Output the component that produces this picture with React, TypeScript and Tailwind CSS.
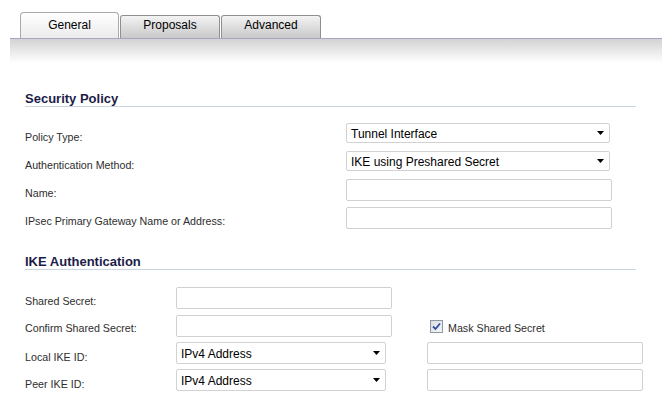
import React from "react";

const font = { fontFamily: '"Liberation Sans", Arial, sans-serif' };

function Arrow() {
  return (
    <svg width="7" height="4" viewBox="0 0 7 4" className="shrink-0">
      <path d="M0 0h7L3.5 4z" fill="#000" />
    </svg>
  );
}

function Select({ value, w, h }: { value: string; w: string; h: string }) {
  return (
    <div
      className={`${w} ${h} flex items-center justify-between border border-[#d2d2d2] rounded-[2px] bg-white pl-[4px] pr-[5px] text-[12px] leading-[14px] text-black`}
    >
      <span className="pt-px">{value}</span>
      <Arrow />
    </div>
  );
}

function Input({ w }: { w: string }) {
  return <div className={`${w} h-[22px] border border-[#d0d0d0] rounded-[2px] bg-white`} />;
}

function Label({ text, pt }: { text: string; pt: string }) {
  return <div className={`${pt} text-[10.7px] leading-[14px] text-[#2e2e2e]`}>{text}</div>;
}

function Heading({ text }: { text: string }) {
  return (
    <div className="h-[16px] border-b border-[#c9d6df] flex items-center">
      <span className="text-[13px] leading-[15px] font-bold text-[#1c1c48]">{text}</span>
    </div>
  );
}

function Tab({ label, active }: { label: string; active?: boolean }) {
  return (
    <div
      className={
        active
          ? "w-[99px] h-[26px] flex items-end justify-center pb-[6px] rounded-t-[4px] border border-b-0 border-[#a9a9a9] bg-gradient-to-b from-white to-[#ebebeb]"
          : "w-[100px] h-[23px] flex items-end justify-center pb-[6px] rounded-t-[3px] border border-b-0 border-[#8f8f8f] bg-gradient-to-b from-[#f3f3f3] to-[#c9c9c9]"
      }
    >
      <span className="text-[12px] leading-[14px] text-black">{label}</span>
    </div>
  );
}

export default function App() {
  return (
    <div className="w-[662px] h-[402px] bg-white overflow-hidden pt-[12px]" style={font}>
      <div className="flex items-end gap-px pl-[20px] h-[26px]">
        <Tab label="General" active />
        <Tab label="Proposals" />
        <Tab label="Advanced" />
      </div>
      <div className="ml-[10px] h-px bg-[#aaa6c0]" />
      <div className="ml-[10px] h-[24px] bg-gradient-to-b from-[#d3d3d3] to-white" />

      <div className="pl-[25px] pr-[26px] pt-[28px]">
        <Heading text="Security Policy" />
        <div className="mt-[16px] grid grid-cols-[321px_1fr]">
          <div className="h-[28px]"><Label text="Policy Type:" pt="pt-[7px]" /></div>
          <div className="h-[28px]"><Select value="Tunnel Interface" w="w-[264px]" h="h-[20px]" /></div>
          <div className="h-[28px]"><Label text="Authentication Method:" pt="pt-[7px]" /></div>
          <div className="h-[28px]"><Select value="IKE using Preshared Secret" w="w-[264px]" h="h-[20px]" /></div>
          <div className="h-[28px]"><Label text="Name:" pt="pt-[7px]" /></div>
          <div className="h-[28px]"><Input w="w-[266px]" /></div>
          <div className="h-[28px]"><Label text="IPsec Primary Gateway Name or Address:" pt="pt-[7px]" /></div>
          <div className="h-[28px]"><Input w="w-[266px]" /></div>
        </div>

        <div className="mt-[19px]">
          <Heading text="IKE Authentication" />
        </div>
        <div className="mt-[17px] grid grid-cols-[151px_251px_1fr]">
          <div className="h-[28px]"><Label text="Shared Secret:" pt="pt-[7px]" /></div>
          <div className="h-[28px]"><Input w="w-[216px]" /></div>
          <div className="h-[28px]" />

          <div className="h-[27px]"><Label text="Confirm Shared Secret:" pt="pt-[6px]" /></div>
          <div className="h-[27px]"><Input w="w-[216px]" /></div>
          <div className="h-[27px] pt-[5px] pl-[3px] flex items-start gap-[5px]">
            <div className="w-[13px] h-[13px] border border-[#8c98a4] bg-gradient-to-br from-[#dcdcdc] to-[#f6f6f6] flex items-center justify-center">
              <svg width="9" height="9" viewBox="0 0 9 9">
                <path d="M1 4.5 L3.5 7 L8 1.5" fill="none" stroke="#2b4fa8" strokeWidth="1.8" />
              </svg>
            </div>
            <span className="text-[10.7px] leading-[14px] text-[#2e2e2e] mt-[1px]">Mask Shared Secret</span>
          </div>

          <div className="h-[27px]"><Label text="Local IKE ID:" pt="pt-[8px]" /></div>
          <div className="h-[27px]"><Select value="IPv4 Address" w="w-[210px]" h="h-[22px]" /></div>
          <div className="h-[27px]"><Input w="w-[216px]" /></div>

          <div className="h-[27px]"><Label text="Peer IKE ID:" pt="pt-[8px]" /></div>
          <div className="h-[27px]"><Select value="IPv4 Address" w="w-[210px]" h="h-[22px]" /></div>
          <div className="h-[27px]"><Input w="w-[216px]" /></div>
        </div>
      </div>
    </div>
  );
}
